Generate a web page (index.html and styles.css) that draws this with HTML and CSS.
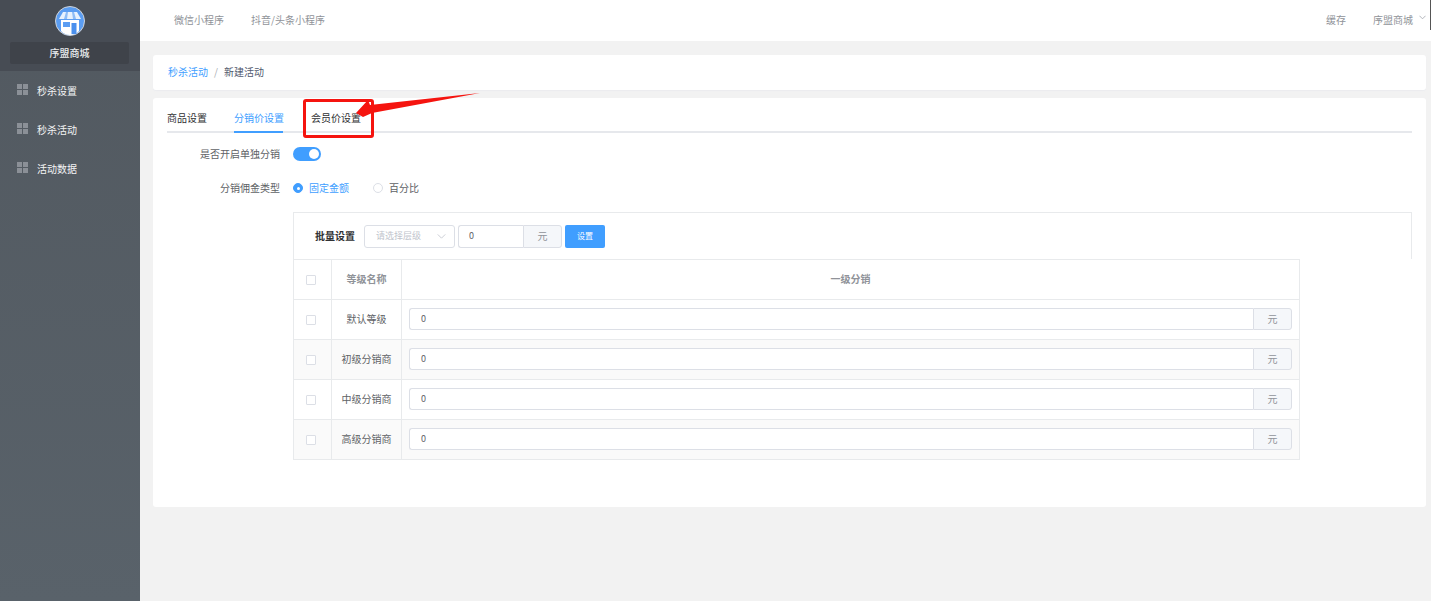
FILE: index.html
```html
<!DOCTYPE html>
<html lang="zh">
<head>
<meta charset="utf-8">
<title>新建活动</title>
<link rel="stylesheet" href="styles.css">
</head>
<body>
<div class="app">
  <aside class="sidebar">
    <div class="brand">
      <svg class="logo" viewBox="0 0 30 30" width="30" height="30">
        <circle cx="15" cy="15" r="14.5" fill="#5b9df2" stroke="#cfd3d8" stroke-width="1"/>
        <path d="M8 6h14l4 7H4z" fill="#e9f2fd"/>
        <path d="M11 6h2l-1 7H9zM17 6h2l2 7h-3z" fill="#8fbdf6"/>
        <path d="M6 14h18v11a12 12 0 0 1-18 0z" fill="#fff"/>
        <rect x="8" y="16" width="7" height="5" fill="#5b9df2"/>
        <rect x="16.500" y="17" width="5" height="11" fill="#4a90ee"/>
      </svg>
      <div class="brand-name">序盟商城</div>
    </div>
    <nav class="menu">
      <a class="menu-item"><span class="grid-icon"><i></i><i></i><i></i><i></i></span>秒杀设置</a>
      <a class="menu-item"><span class="grid-icon"><i></i><i></i><i></i><i></i></span>秒杀活动</a>
      <a class="menu-item"><span class="grid-icon"><i></i><i></i><i></i><i></i></span>活动数据</a>
    </nav>
  </aside>
  <div class="main">
    <header class="topbar">
      <div class="top-links">
        <a>微信小程序</a>
        <a>抖音/头条小程序</a>
      </div>
      <div class="top-right">
        <a class="cache">缓存</a>
        <a class="user">序盟商城</a>
        <svg class="top-chevron" viewBox="0 0 8 5" width="7" height="5"><path d="M.5.5 4 4 7.500.5" fill="none" stroke="#a9adb3" stroke-width="1"/></svg>
      </div>
    </header>
    <div class="content">
      <div class="card crumbs">
        <a class="crumb-link">秒杀活动</a><span class="crumb-sep">/</span><span class="crumb-cur">新建活动</span>
      </div>
      <div class="card panel">
        <div class="tabs">
          <a class="tab">商品设置</a>
          <a class="tab active">分销价设置</a>
          <a class="tab">会员价设置</a>
        </div>
        <div class="form-row switch-row">
          <label class="form-label">是否开启单独分销</label>
          <span class="switch"><i></i></span>
        </div>
        <div class="form-row radio-row">
          <label class="form-label">分销佣金类型</label>
          <span class="radio on"><i></i></span><span class="radio-text on-text">固定金额</span>
          <span class="radio"></span><span class="radio-text">百分比</span>
        </div>
        <div class="batch-box">
          <div class="batch">
            <span class="batch-label">批量设置</span>
            <span class="select">请选择层级<svg viewBox="0 0 10 6" width="9" height="5"><path d="M.5.5 5 5 9.500.5" fill="none" stroke="#c0c4cc" stroke-width="1"/></svg></span>
            <span class="input-group batch-input"><span class="input">0</span><span class="append">元</span></span>
            <button class="btn" type="button">设置</button>
          </div>
          <table class="levels">
            <thead>
              <tr><th class="c-check"><span class="checkbox"></span></th><th class="c-name">等级名称</th><th>一级分销</th></tr>
            </thead>
            <tbody>
              <tr><td><span class="checkbox"></span></td><td>默认等级</td><td><span class="input-group"><span class="input">0</span><span class="append">元</span></span></td></tr>
              <tr class="stripe"><td><span class="checkbox"></span></td><td>初级分销商</td><td><span class="input-group"><span class="input">0</span><span class="append">元</span></span></td></tr>
              <tr><td><span class="checkbox"></span></td><td>中级分销商</td><td><span class="input-group"><span class="input">0</span><span class="append">元</span></span></td></tr>
              <tr class="stripe"><td><span class="checkbox"></span></td><td>高级分销商</td><td><span class="input-group"><span class="input">0</span><span class="append">元</span></span></td></tr>
            </tbody>
          </table>
        </div>
      </div>
    </div>
  </div>
</div>
<div class="scroll-mark"></div>
<div class="callout-box"></div>
<svg class="callout-arrow" viewBox="0 0 130 30" width="130" height="30"><path d="M127 0 19 20 10 24 3 20 15 7 17 12z" fill="#f5140f"/></svg>
</body>
</html>
```
FILE: styles.css
```css
* { box-sizing: border-box; }
html, body { margin: 0; height: 100%; overflow: hidden; }
body {
  font-family: "Noto Sans CJK SC", "Liberation Sans", sans-serif;
  font-size: 10px;
  line-height: 14px;
  color: #606266;
  background: #f2f2f2;
}
a { color: inherit; text-decoration: none; }
.app { display: flex; height: 601px; }

.sidebar { width: 140px; flex: none; background: linear-gradient(#525960, #59626a); color: #fff; }
.brand {
  height: 71px;
  padding: 6px 10px 0;
  background: #474c54;
  display: flex;
  flex-direction: column;
  align-items: center;
}
.logo { display: block; flex: none; }
.brand-name {
  align-self: flex-start;
  margin-top: 6px;
  width: 119px;
  height: 22px;
  background: #3f434a;
  border-radius: 2px;
  line-height: 22px;
  text-align: center;
  font-weight: 500;
  color: #eceef0;
}
.menu-item { display: flex; align-items: center; height: 39px; padding-left: 17px; color: #f4f5f6; }
.grid-icon { display: grid; grid-template-columns: 5px 5px; gap: 1px; margin-right: 9px; margin-top: -3px; }
.grid-icon i { width: 5px; height: 5px; background: #8b9097; }

.main { flex: 1; min-width: 0; display: flex; flex-direction: column; }
.topbar {
  height: 41px;
  flex: none;
  background: #fff;
  display: flex;
  justify-content: space-between;
  align-items: center;
  padding: 0 5px 2px 34px;
  color: #909399;
}
.top-links { display: flex; gap: 27px; }
.top-right { display: flex; align-items: center; }
.cache { margin-right: 27px; }
.top-chevron { margin-left: 6px; margin-top: -4px; }

.content { padding: 14px 5px 0 13px; }
.card { background: #fff; border-radius: 3px; }
.crumbs {
  height: 35px;
  padding: 0 0 2px 15px;
  display: flex;
  align-items: center;
  box-shadow: 0 1px 1px #ebecef;
}
.crumb-link { color: #409eff; }
.crumb-sep { margin: 0 6px; color: #a9adb3; width: 4px; }
.crumb-cur { color: #515a6e; }

.panel { margin-top: 8px; height: 409px; padding: 0 14px; }
.tabs {
  display: flex;
  height: 35px;
  padding-top: 12px;
  border-bottom: 2px solid #e6e8ec;
  gap: 27px;
}
.tab { height: 21px; padding-top: 1px; color: #303133; }
.tab.active { color: #409eff; border-bottom: 2px solid #409eff; height: 23px; width: 49px; margin-right: 1px; white-space: nowrap; }

.form-row { display: flex; align-items: center; height: 16px; }
.switch-row { margin-top: 13px; }
.radio-row { margin-top: 18px; }
.form-label { width: 113px; text-align: right; margin-right: 13px; color: #606266; padding-bottom: 1px; }
.switch { position: relative; width: 28px; height: 14px; background: #409eff; border-radius: 7px; }
.switch i { position: absolute; right: 2px; top: 2px; width: 10px; height: 10px; border-radius: 50%; background: #fff; }
.radio {
  width: 10px;
  height: 10px;
  border: 1px solid #dcdfe6;
  border-radius: 50%;
  display: flex;
  align-items: center;
  justify-content: center;
  background: #fff;
}
.radio.on { background: #409eff; border-color: #409eff; }
.radio.on i { width: 3px; height: 3px; border-radius: 50%; background: #fff; }
.radio-text { margin-left: 6px; margin-right: 24px; }
.on-text { color: #409eff; }

.batch-box {
  margin: 16px 0 0 126px;
  width: 1119px;
  height: 47px;
  border: 1px solid #e8eaec;
  border-bottom: 0;
  background: #fff;
  position: relative;
}
.batch { display: flex; align-items: center; height: 46px; padding: 0 0 0 21px; }
.batch-label { width: 49px; color: #303133; font-weight: 700; }
.select {
  width: 91px;
  height: 23px;
  border: 1px solid #dcdfe6;
  border-radius: 3px;
  padding: 0 8px 0 11px;
  display: flex;
  align-items: center;
  justify-content: space-between;
  font-size: 9px;
  color: #c0c4cc;
  margin-right: 3px;
}
.input-group { display: flex; height: 22px; width: 883px; }
.input {
  flex: 1;
  border: 1px solid #dcdfe6;
  border-right: 0;
  border-radius: 3px 0 0 3px;
  padding-left: 11px;
  display: flex;
  align-items: center;
  background: #fff;
  color: #606266;
  font-size: 9px;
}
.append {
  width: 39px;
  flex: none;
  border: 1px solid #dcdfe6;
  border-radius: 0 3px 3px 0;
  background: #f5f7fa;
  display: flex;
  align-items: center;
  justify-content: center;
  color: #909399;
}
.batch-input { width: 104px; height: 23px; }
.batch-input .input { padding-left: 10px; }
.btn {
  margin-left: 3px;
  width: 40px;
  height: 23px;
  padding: 0;
  border: 0;
  border-radius: 2px;
  background: #409eff;
  color: #fff;
  font: inherit;
  font-size: 8px;
}

.levels {
  position: relative;
  left: -1px;
  width: 1007px;
  border-collapse: collapse;
  table-layout: fixed;
  background: #fff;
}
.levels th, .levels td {
  border: 1px solid #e8eaec;
  height: 40px;
  padding: 0 0 2px;
  text-align: center;
  vertical-align: middle;
}
.levels th { color: #909399; font-weight: 700; }
.levels td { color: #606266; }
.levels td:last-child { padding-left: 7px; }
.levels th:first-child, .levels td:first-child { padding-right: 3px; }
.c-check { width: 38px; }
.c-name { width: 70px; }
.stripe td { background: #fafafa; }
.checkbox {
  display: inline-block;
  width: 10px;
  height: 10px;
  border: 1px solid #dcdfe6;
  border-radius: 1px;
  background: #fff;
  vertical-align: middle;
}

.scroll-mark { position: absolute; right: 0; top: 0; width: 1px; height: 30px; background: #555; }
.callout-box {
  position: absolute;
  left: 303px;
  top: 99px;
  width: 71px;
  height: 39px;
  border: 3px solid #f5140f;
  border-radius: 3px;
}
.callout-arrow { position: absolute; left: 353px; top: 93px; }
```
